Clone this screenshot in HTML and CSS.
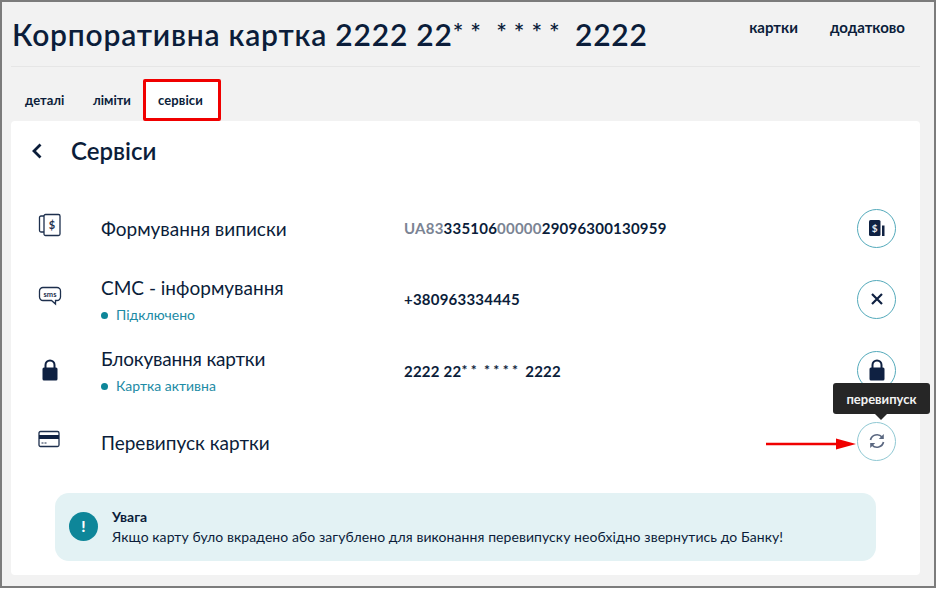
FILE: index.html
```html
<!DOCTYPE html>
<html lang="uk">
<head>
<meta charset="utf-8">
<title>Сервіси</title>
<link rel="stylesheet" href="styles.css">
</head>
<body>
<div class="frame">
  <header class="top">
    <h1 class="title">Корпоративна картка 2222 22<span class="stars">**</span> <span class="stars">****</span> 2222</h1>
    <nav class="nav"><a>картки</a><a>додатково</a></nav>
  </header>
  <div class="tabs">
    <a class="tab tab-a">деталі</a>
    <a class="tab tab-b">ліміти</a>
    <a class="tab tab-active">сервіси</a>
  </div>
  <main class="card">
    <div class="head">
      <svg class="back" width="12" height="16" viewBox="0 0 12 16"><path d="M9.5 1.5 3 8l6.500 6.500" fill="none" stroke="#0b1d3a" stroke-width="2.800"/></svg>
      <h2 class="head-title">Сервіси</h2>
    </div>
    <div class="rows">
      <div class="row">
        <div class="ico ico-1">
          <svg width="24" height="24" viewBox="0 0 24 24"><path d="M6 3H3a1.500 1.500 0 0 0-1.500 1.500V17.500A1.500 1.500 0 0 0 3 19h3" fill="none" stroke="#1d2f4d" stroke-width="1.300"/><rect x="6" y="1.500" width="16" height="21" rx="1.500" fill="#fff" stroke="#1d2f4d" stroke-width="1.300"/><text x="14" y="16" font-size="11" text-anchor="middle" class="svg-text">$</text></svg>
        </div>
        <div class="label label-a">Формування виписки</div>
        <div class="val"><span class="mut">UA83</span>335106<span class="mut">00000</span>29096300130959</div>
        <button class="btn">
          <svg width="20" height="20" viewBox="0 0 20 20"><rect x="2" y="2" width="11.500" height="16" rx="1.500" fill="#0f2142"/><rect x="15" y="7.500" width="2.500" height="10.500" fill="#0f2142"/><text x="7.700" y="14" font-size="10" text-anchor="middle" class="svg-text-w">$</text></svg>
        </button>
      </div>
      <div class="row">
        <div class="ico ico-2">
          <svg width="24" height="20" viewBox="0 0 24 20"><path d="M5 1.500h14a3.500 3.500 0 0 1 3.500 3.500v6a3.500 3.500 0 0 1-3.500 3.500h-1.500V18l-4-3.500H5A3.500 3.500 0 0 1 1.500 11V5A3.500 3.500 0 0 1 5 1.500z" fill="#fff" stroke="#1d2f4d" stroke-width="1.300"/><text x="12" y="10.500" font-size="7.500" text-anchor="middle" class="svg-text">sms</text></svg>
        </div>
        <div class="label-wrap">
          <div class="label">СМС - інформування</div>
          <div class="status">Підключено</div>
        </div>
        <div class="val">+380963334445</div>
        <button class="btn">
          <svg width="14" height="14" viewBox="0 0 14 14"><path d="m2 2 10 10M12 2 2 12" stroke="#0f2142" stroke-width="2.200" fill="none"/></svg>
        </button>
      </div>
      <div class="row">
        <div class="ico ico-3">
          <svg width="18" height="22" viewBox="0 0 18 22"><path d="M4.500 9V6a4.500 4.500 0 0 1 9 0v3" fill="none" stroke="#0f2142" stroke-width="2"/><rect x="1.500" y="8.500" width="15" height="13" rx="1.500" fill="#0f2142"/></svg>
        </div>
        <div class="label-wrap">
          <div class="label label-tight">Блокування картки</div>
          <div class="status">Картка активна</div>
        </div>
        <div class="val">2222 22<span class="stars-sm">**</span> <span class="stars-sm">****</span> 2222</div>
        <button class="btn">
          <svg width="18" height="22" viewBox="0 0 18 22"><path d="M4.500 9V6a4.500 4.500 0 0 1 9 0v3" fill="none" stroke="#0f2142" stroke-width="2"/><rect x="1.500" y="8.500" width="15" height="13" rx="1.500" fill="#0f2142"/></svg>
        </button>
      </div>
      <div class="row">
        <div class="ico ico-4">
          <svg width="22" height="18" viewBox="0 0 22 18"><rect x="1" y="1.500" width="20" height="15" rx="1.500" fill="#fff" stroke="#1d2f4d" stroke-width="1.300"/><rect x="1" y="5" width="20" height="4" fill="#0f2142"/><path d="M3.500 13h2M6.500 13h2" stroke="#1d2f4d" stroke-width="1"/></svg>
        </div>
        <div class="label label-b">Перевипуск картки</div>
        <div class="val"></div>
        <div class="btn-wrap">
          <button class="btn btn-light">
            <svg width="18" height="18" viewBox="0 0 18 18"><path d="M2.500 8A6.700 6.700 0 0 1 14 5M15.500 10A6.700 6.700 0 0 1 4 13" fill="none" stroke="#5a6780" stroke-width="1.700"/><path d="M15.800 2v5h-5zM2.200 16v-5h5z" fill="#5a6780"/></svg>
          </button>
          <div class="tip">перевипуск</div>
          <svg class="arrow" width="92" height="12" viewBox="0 0 92 12"><path d="M0 6h76" stroke="#f00000" stroke-width="2.400"/><path d="M70 0.500l20 5.500-20 5.500z" fill="#f00000"/></svg>
        </div>
      </div>
    </div>
    <section class="alert">
      <div class="alert-ico">!</div>
      <div>
        <div class="alert-title">Увага</div>
        <div class="alert-text">Якщо карту було вкрадено або загублено для виконання перевипуску необхідно звернутись до Банку!</div>
      </div>
    </section>
  </main>
</div>
</body>
</html>
```
FILE: styles.css
```css
* { box-sizing: border-box; }
html, body { margin: 0; padding: 0; }
body {
  width: 936px;
  height: 589px;
  overflow: hidden;
  font-family: "Lato", "Noto Sans", sans-serif;
  color: #0b1d3a;
}
.frame {
  width: 936px;
  height: 588px;
  background: #f2f2f2;
  border: 2px solid #7c7c7c;
  padding: 0 14px 0 9px;
  display: flex;
  flex-direction: column;
}
.top {
  height: 65px;
  border-bottom: 1px solid #e6e6e6;
  display: flex;
  justify-content: space-between;
  align-items: flex-start;
  padding: 10px 0 0 1px;
}
.title {
  margin: 0;
  font-size: 30px;
  font-weight: 600;
  line-height: 41px;
  letter-spacing: 0.78px;
  white-space: pre;
}
.stars { font-size: 25px; vertical-align: 4px; letter-spacing: 7px; }
.nav {
  display: flex;
  gap: 32px;
  padding: 6px 15px 0 0;
  font-size: 15px;
  font-weight: 700;
  line-height: 18px;
}
.tabs {
  display: flex;
  height: 54px;
  padding-top: 12px;
  font-size: 13px;
  font-weight: 700;
}
.tab {
  height: 42px;
  line-height: 43px;
  display: block;
}
.tab-a { padding-left: 14px; width: 82px; }
.tab-b { width: 50px; }
.tab-active {
  width: 78px;
  background: #fff;
  border: 3px solid #f00000;
  border-radius: 2px;
  line-height: 37px;
  padding-left: 12px;
  letter-spacing: 0.1px;
}
.card {
  background: #fff;
  border-radius: 4px;
  height: 455px;
  margin-bottom: 11px;
  display: flex;
  flex-direction: column;
}
.head {
  display: flex;
  align-items: center;
  height: 60px;
  padding: 0 0 0 20px;
}
.back { margin-right: 28px; }
.head-title { margin: 0; font-size: 24px; font-weight: 600; }
.rows {
  display: flex;
  flex-direction: column;
  padding: 12px 24px 0 27px;
}
.row {
  height: 71px;
  display: grid;
  grid-template-columns: 63px 303px 1fr 39px;
  align-items: center;
}
.ico { display: flex; align-items: center; }
.ico-1 { transform: translateY(-3px); }
.ico-2 { transform: translateY(-3px); }
.ico-3 { margin-left: 3px; }
.ico-4 { transform: translateY(-2px); }
.label { font-size: 19px; line-height: 24px; }
.label-a { padding-top: 2px; }
.label-b { padding-top: 4px; }
.label-tight { letter-spacing: -0.2px; }
.label-wrap { transform: translateY(1px); }
.status {
  font-size: 14px;
  line-height: 18px;
  margin-top: 6px;
  color: #1d8ba5;
  display: flex;
  align-items: center;
}
.status::before {
  content: "";
  width: 7px;
  height: 7px;
  border-radius: 50%;
  background: #0e8699;
  margin-right: 8px;
}
.val { font-size: 15px; font-weight: 700; letter-spacing: 0.22px; }
.mut { color: #7b8494; }
.stars-sm { font-size: 14px; vertical-align: 2px; letter-spacing: 3.4px; }
.btn {
  width: 39px;
  height: 39px;
  padding: 0;
  border-radius: 50%;
  border: 1.500px solid #54aabb;
  background: #fff;
  display: flex;
  align-items: center;
  justify-content: center;
}
.btn-light { border-color: #8fc8d3; }
.btn-wrap { position: relative; width: 39px; height: 39px; }
.tip {
  position: absolute;
  left: -24px;
  top: -39px;
  width: 97px;
  height: 31px;
  background: #262626;
  border-radius: 3px;
  color: #f2f2f2;
  font-size: 13px;
  font-weight: 700;
  line-height: 32px;
  text-align: center;
}
.tip::after {
  content: "";
  position: absolute;
  left: 42px;
  bottom: -6px;
  border-left: 6px solid transparent;
  border-right: 6px solid transparent;
  border-top: 6px solid #262626;
}
.arrow { position: absolute; left: -91px; top: 16px; }
.alert {
  margin: 16px 44px 0 44px;
  height: 68px;
  background: #e3f2f4;
  border-radius: 14px;
  display: flex;
  align-items: center;
  gap: 14px;
  padding: 0 14px;
  font-size: 14px;
}
.alert-ico {
  width: 29px;
  height: 29px;
  border-radius: 50%;
  background: #0e8699;
  color: #fff;
  font-weight: 900;
  font-size: 15px;
  text-align: center;
  line-height: 29px;
  flex: none;
}
.alert-title { font-weight: 700; font-size: 14px; line-height: 20px; }
.alert-text { line-height: 20px; letter-spacing: 0.07px; white-space: nowrap; }
.svg-text { font-family: "Lato", sans-serif; font-weight: 700; fill: #1d2f4d; }
.svg-text-w { font-family: "Lato", sans-serif; font-weight: 700; fill: #e8ecf2; }
```
